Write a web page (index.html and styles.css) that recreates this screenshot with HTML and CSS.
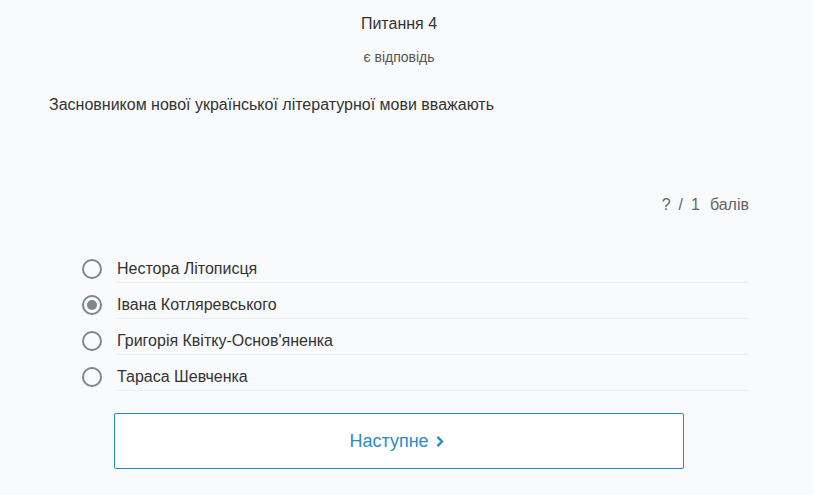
FILE: index.html
```html
<!DOCTYPE html>
<html lang="uk">
<head>
<meta charset="utf-8">
<link rel="stylesheet" href="styles.css">
</head>
<body>
<div class="page">
  <div class="title">Питання 4</div>
  <div class="status">є відповідь</div>
  <div class="question">Засновником нової української літературної мови вважають</div>
  <div class="score"><span>?</span><span>/</span><span>1</span><span>балів</span></div>
  <ul class="options">
    <li class="option"><span class="radio"></span><span class="label">Нестора Літописця</span></li>
    <li class="option"><span class="radio checked"></span><span class="label">Івана Котляревського</span></li>
    <li class="option"><span class="radio"></span><span class="label">Григорія Квітку-Основ'яненка</span></li>
    <li class="option"><span class="radio"></span><span class="label">Тараса Шевченка</span></li>
  </ul>
  <div class="actions">
    <button class="next">Наступне <svg class="chev" width="10" height="13" viewBox="0 0 10 13"><path d="M2.5 1.8 L7 6.5 L2.5 11.2" fill="none" stroke="currentColor" stroke-width="2.4"/></svg></button>
  </div>
</div>
</body>
</html>
```
FILE: styles.css
```css
html, body {
  margin: 0;
  padding: 0;
  background: #f9fafc;
}
body {
  font-family: "Liberation Sans", Arial, sans-serif;
  color: #333;
}
.page {
  width: 700px;
  padding: 0 64px 0 49px;
}
.title {
  text-align: center;
  font-size: 16px;
  line-height: 18px;
  padding-top: 15px;
  color: #333;
}
.status {
  text-align: center;
  font-size: 14px;
  line-height: 16px;
  margin-top: 16px;
  color: #555;
}
.question {
  font-size: 16px;
  line-height: 18px;
  margin-top: 31px;
  color: #333;
}
.score {
  display: flex;
  justify-content: flex-end;
  gap: 8px;
  font-size: 16px;
  line-height: 18px;
  margin-top: 82px;
  color: #666;
}
.score span:last-child { margin-left: 2px; }
.options {
  list-style: none;
  margin: 37px 0 0 33px;
  padding: 0;
}
.option {
  display: flex;
  align-items: center;
  height: 36px;
}
.radio {
  width: 16px;
  height: 16px;
  border: 2px solid #7d878c;
  border-radius: 50%;
  flex: none;
  display: flex;
  align-items: center;
  justify-content: center;
  margin-right: 15px;
}
.radio.checked::after {
  content: "";
  width: 10px;
  height: 10px;
  border-radius: 50%;
  background: #7d878c;
}
.label {
  flex: 1;
  align-self: flex-start;
  font-size: 16px;
  line-height: 27px;
  padding-top: 4px;
  color: #333;
  border-bottom: 1px solid #eceff2;
}
.actions {
  display: flex;
  justify-content: center;
  margin-top: 18px;
}
.next {
  width: 570px;
  height: 56px;
  background: #fff;
  border: 1px solid #1b8ec2;
  border-radius: 2px;
  color: #2a8bc8;
  font-family: "Liberation Sans", Arial, sans-serif;
  font-size: 18px;
  display: flex;
  align-items: center;
  justify-content: center;
  gap: 6px;
  padding: 0 4px 0 0;
}
.chev { display: block; }
```
